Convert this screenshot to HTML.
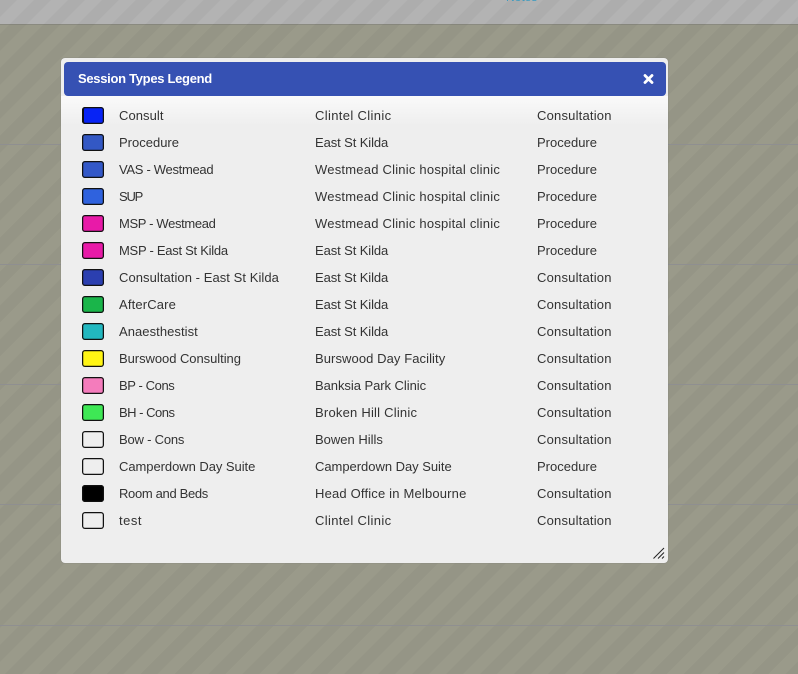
<!DOCTYPE html>
<html>
<head>
<meta charset="utf-8">
<style>
html,body{margin:0;padding:0;width:798px;height:674px;overflow:hidden}
body{position:relative;font-family:"Liberation Sans",sans-serif;background:#9a9a8a}
#bg{position:absolute;left:0;top:0}
#dlg{position:absolute;left:61px;top:58px;width:607px;height:505px;background:#eee;border-radius:4px;box-shadow:0 0 1px #777}
#grad{position:absolute;left:0;top:38px;width:607px;height:30px;background:linear-gradient(#fafafa,#eee)}
#hd{position:absolute;left:3px;top:4px;width:602px;height:34px;background:#3651b3;border-radius:4px;color:#fff;font-weight:bold;font-size:13px;letter-spacing:-.3px;line-height:33px;text-indent:14px}
.r{position:absolute;left:0;width:607px;height:27px;font-size:13px;line-height:27px;color:#333;white-space:nowrap}
.r i{position:absolute;left:21px;top:5px;width:22px;height:17px;box-sizing:border-box;box-shadow:inset 0 0 0 1.25px #111;border-radius:3px}
.r b{position:absolute;font-weight:normal}
.a{left:58px;letter-spacing:.06px}.b{left:254px;letter-spacing:.22px}.c{left:476px;letter-spacing:.2px}
.p{letter-spacing:0}
</style>
</head>
<body>
<svg id="bg" width="798" height="674" xmlns="http://www.w3.org/2000/svg">
<defs>
<pattern id="p" width="24" height="24" patternUnits="userSpaceOnUse" patternTransform="rotate(45)">
<rect width="12" height="24" fill="#000" fill-opacity=".03"/>
</pattern>
</defs>
<rect width="798" height="24" fill="#b3b3b3"/>
<rect y="24" width="798" height="1" fill="#8a8a80"/>
<rect y="25" width="798" height="649" fill="#9a9a8a"/>
<rect width="798" height="674" fill="url(#p)"/>
<g fill="#8f8f90">
<rect y="144" width="798" height="1"/>
<rect y="264" width="798" height="1"/>
<rect y="384" width="798" height="1"/>
<rect y="504" width="798" height="1"/>
<rect y="625" width="798" height="1"/>
</g>
<text x="506" y="1" font-family="Liberation Sans" font-size="12" fill="#3a9bc0">Notes</text>
</svg>
<div id="dlg">
<div id="grad"></div>
<div id="hd">Session Types Legend</div>
<svg style="position:absolute;left:582px;top:15px" width="11" height="12" viewBox="0 0 11 12"><path d="M2 2.5L9 9.5M9 2.5L2 9.5" stroke="#fff" stroke-width="2.8" stroke-linecap="round"/></svg>
<div class="r" style="top:44px"><i style="background:#0723f5;box-shadow:inset 0 0 0 1.25px #111,inset 3px 0 0 -1px #111"></i><b class="a">Consult</b><b class="b" style="letter-spacing:.35px">Clintel Clinic</b><b class="c">Consultation</b></div>
<div class="r" style="top:71px"><i style="background:#3358c4"></i><b class="a" style="letter-spacing:0">Procedure</b><b class="b" style="letter-spacing:-.1px">East St Kilda</b><b class="c p">Procedure</b></div>
<div class="r" style="top:98px"><i style="background:#3358c8"></i><b class="a" style="letter-spacing:-.3px">VAS - Westmead</b><b class="b">Westmead Clinic hospital clinic</b><b class="c p">Procedure</b></div>
<div class="r" style="top:125px"><i style="background:#2f62de"></i><b class="a" style="letter-spacing:-1.2px">SUP</b><b class="b">Westmead Clinic hospital clinic</b><b class="c p">Procedure</b></div>
<div class="r" style="top:152px"><i style="background:#e81aa8"></i><b class="a" style="letter-spacing:-.35px">MSP - Westmead</b><b class="b">Westmead Clinic hospital clinic</b><b class="c p">Procedure</b></div>
<div class="r" style="top:179px"><i style="background:#e81aa8"></i><b class="a" style="letter-spacing:-.27px">MSP - East St Kilda</b><b class="b" style="letter-spacing:-.1px">East St Kilda</b><b class="c p">Procedure</b></div>
<div class="r" style="top:206px"><i style="background:#2b3fb0"></i><b class="a">Consultation - East St Kilda</b><b class="b" style="letter-spacing:-.1px">East St Kilda</b><b class="c">Consultation</b></div>
<div class="r" style="top:233px"><i style="background:#1ab54a"></i><b class="a" style="letter-spacing:.15px">AfterCare</b><b class="b" style="letter-spacing:-.1px">East St Kilda</b><b class="c">Consultation</b></div>
<div class="r" style="top:260px"><i style="background:#22b8c0"></i><b class="a">Anaesthestist</b><b class="b" style="letter-spacing:-.1px">East St Kilda</b><b class="c">Consultation</b></div>
<div class="r" style="top:287px"><i style="background:#fff514"></i><b class="a" style="letter-spacing:-.05px">Burswood Consulting</b><b class="b" style="letter-spacing:.08px">Burswood Day Facility</b><b class="c">Consultation</b></div>
<div class="r" style="top:314px"><i style="background:#f47cbc"></i><b class="a" style="letter-spacing:-.4px">BP - Cons</b><b class="b" style="letter-spacing:-.05px">Banksia Park Clinic</b><b class="c">Consultation</b></div>
<div class="r" style="top:341px"><i style="background:#3ee855"></i><b class="a" style="letter-spacing:-.5px">BH - Cons</b><b class="b">Broken Hill Clinic</b><b class="c">Consultation</b></div>
<div class="r" style="top:368px"><i style="background:#eee"></i><b class="a" style="letter-spacing:-.2px">Bow - Cons</b><b class="b" style="letter-spacing:0">Bowen Hills</b><b class="c">Consultation</b></div>
<div class="r" style="top:395px"><i style="background:#eee"></i><b class="a" style="letter-spacing:-.05px">Camperdown Day Suite</b><b class="b" style="letter-spacing:-.03px">Camperdown Day Suite</b><b class="c p">Procedure</b></div>
<div class="r" style="top:422px"><i style="background:#000"></i><b class="a" style="letter-spacing:-.33px">Room and Beds</b><b class="b" style="letter-spacing:.18px">Head Office in Melbourne</b><b class="c">Consultation</b></div>
<div class="r" style="top:449px"><i style="background:#eee"></i><b class="a" style="letter-spacing:.5px">test</b><b class="b" style="letter-spacing:.35px">Clintel Clinic</b><b class="c">Consultation</b></div>
<svg style="position:absolute;left:591px;top:488px" width="14" height="14" viewBox="0 0 14 14"><path d="M1.5 12.5L12 2M6 12.5L12 6.5M10 12.5L12 10.5" stroke="#222" stroke-width="1" fill="none"/></svg>
</div>
</body>
</html>
